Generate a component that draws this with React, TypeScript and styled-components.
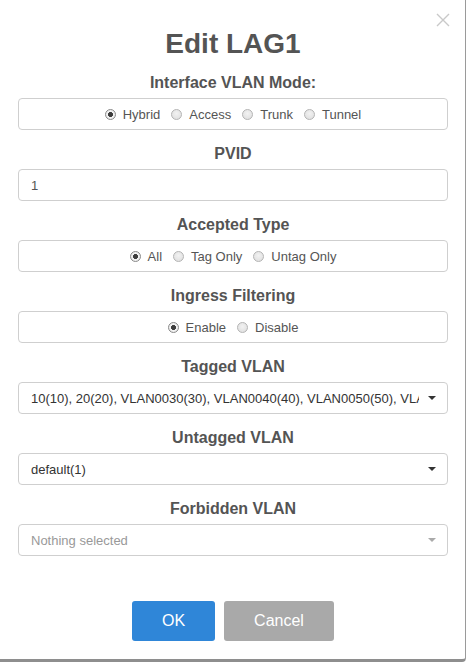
import React from "react";
import styled, { createGlobalStyle } from "styled-components";

const Global = createGlobalStyle`
  html, body { margin: 0; padding: 0; background: #ffffff; }
  body { font-family: "Liberation Sans", Arial, sans-serif; }
  * { box-sizing: border-box; }
`;

const Dialog = styled.div`
  position: relative;
  width: 466px;
  background: #fff;
  border-right: 1px solid #9a9a9a;
  border-bottom: 3px solid #8e8e8e;
  border-bottom-right-radius: 4px;
  padding: 28px 17px 18px 18px;
`;

const Close = styled.button`
  position: absolute;
  top: 12px;
  right: 14px;
  width: 16px;
  height: 16px;
  padding: 0;
  border: none;
  background: none;
  display: flex;
  align-items: center;
  justify-content: center;
`;

const Title = styled.h1`
  margin: 0 0 13px;
  font-size: 28px;
  line-height: 31px;
  font-weight: bold;
  color: #545454;
  text-align: center;
`;

const Section = styled.div`
  display: flex;
  flex-direction: column;
  margin-bottom: 13px;
`;

const Label = styled.div`
  font-size: 16px;
  line-height: 22px;
  font-weight: bold;
  color: #545454;
  text-align: center;
  margin-bottom: 4px;
`;

const Box = styled.div`
  height: 32px;
  border: 1px solid #cfcfcf;
  border-radius: 4px;
  display: flex;
  align-items: center;
  justify-content: center;
  gap: 11px;
  font-size: 13px;
  color: #555;
`;

const RadioItem = styled.label`
  display: flex;
  align-items: center;
  gap: 7px;
`;

const RadioDot = styled.span<{ $on?: boolean }>`
  width: 11px;
  height: 11px;
  border-radius: 50%;
  border: 1px solid ${(p) => (p.$on ? "#8a8a8a" : "#b4b4b4")};
  background: ${(p) =>
    p.$on
      ? "radial-gradient(circle, #3c3c3c 0, #3c3c3c 2.2px, #f4f4f4 2.8px, #e2e2e2 100%)"
      : "radial-gradient(circle at 50% 40%, #f2f2f2 0, #dcdcdc 100%)"};
`;

const Input = styled.div`
  height: 32px;
  border: 1px solid #cfcfcf;
  border-radius: 4px;
  padding: 0 12px;
  display: flex;
  align-items: center;
  font-size: 13px;
  color: #555;
`;

const Select = styled.div<{ $muted?: boolean }>`
  height: 32px;
  border: 1px solid #cfcfcf;
  border-radius: 4px;
  padding: 0 11px 0 12px;
  display: flex;
  align-items: center;
  font-size: 13px;
  color: ${(p) => (p.$muted ? "#999" : "#333")};
`;

const SelectText = styled.span`
  flex: 1;
  overflow: hidden;
  white-space: nowrap;
`;

const Caret = styled.span<{ $muted?: boolean }>`
  margin-left: 9px;
  width: 0;
  height: 0;
  border-left: 4px solid transparent;
  border-right: 4px solid transparent;
  border-top: 4px solid ${(p) => (p.$muted ? "#aaa" : "#333")};
`;

const Buttons = styled.div`
  display: flex;
  justify-content: center;
  gap: 9px;
  margin-top: 45px;
`;

const Btn = styled.button<{ $primary?: boolean; $w: number }>`
  width: ${(p) => p.$w}px;
  height: 40px;
  border: none;
  border-radius: 3px;
  background: ${(p) => (p.$primary ? "#2f86d8" : "#a9a9a9")};
  color: #fff;
  font-family: "Liberation Sans", Arial, sans-serif;
  font-size: 16px;
`;

const Radio = ({ on, children }: { on?: boolean; children: React.ReactNode }) => (
  <RadioItem>
    <RadioDot $on={on} />
    {children}
  </RadioItem>
);

export default function App() {
  return (
    <>
      <Global />
      <Dialog>
        <Close aria-label="close">
          <svg width="14" height="14" viewBox="0 0 14 14">
            <path d="M1 1 L13 13 M13 1 L1 13" stroke="#c9c9c9" strokeWidth="1.4" fill="none" />
          </svg>
        </Close>
        <Title>Edit LAG1</Title>
        <Section>
          <Label>Interface VLAN Mode:</Label>
          <Box>
            <Radio on>Hybrid</Radio>
            <Radio>Access</Radio>
            <Radio>Trunk</Radio>
            <Radio>Tunnel</Radio>
          </Box>
        </Section>
        <Section>
          <Label>PVID</Label>
          <Input>1</Input>
        </Section>
        <Section>
          <Label>Accepted Type</Label>
          <Box>
            <Radio on>All</Radio>
            <Radio>Tag Only</Radio>
            <Radio>Untag Only</Radio>
          </Box>
        </Section>
        <Section>
          <Label>Ingress Filtering</Label>
          <Box>
            <Radio on>Enable</Radio>
            <Radio>Disable</Radio>
          </Box>
        </Section>
        <Section>
          <Label>Tagged VLAN</Label>
          <Select>
            <SelectText>
              10(10), 20(20), VLAN0030(30), VLAN0040(40), VLAN0050(50), VLAN0060(60)
            </SelectText>
            <Caret />
          </Select>
        </Section>
        <Section>
          <Label>Untagged VLAN</Label>
          <Select>
            <SelectText>default(1)</SelectText>
            <Caret />
          </Select>
        </Section>
        <Section>
          <Label>Forbidden VLAN</Label>
          <Select $muted>
            <SelectText>Nothing selected</SelectText>
            <Caret $muted />
          </Select>
        </Section>
        <Buttons>
          <Btn $primary $w={83}>OK</Btn>
          <Btn $w={110}>Cancel</Btn>
        </Buttons>
      </Dialog>
    </>
  );
}
